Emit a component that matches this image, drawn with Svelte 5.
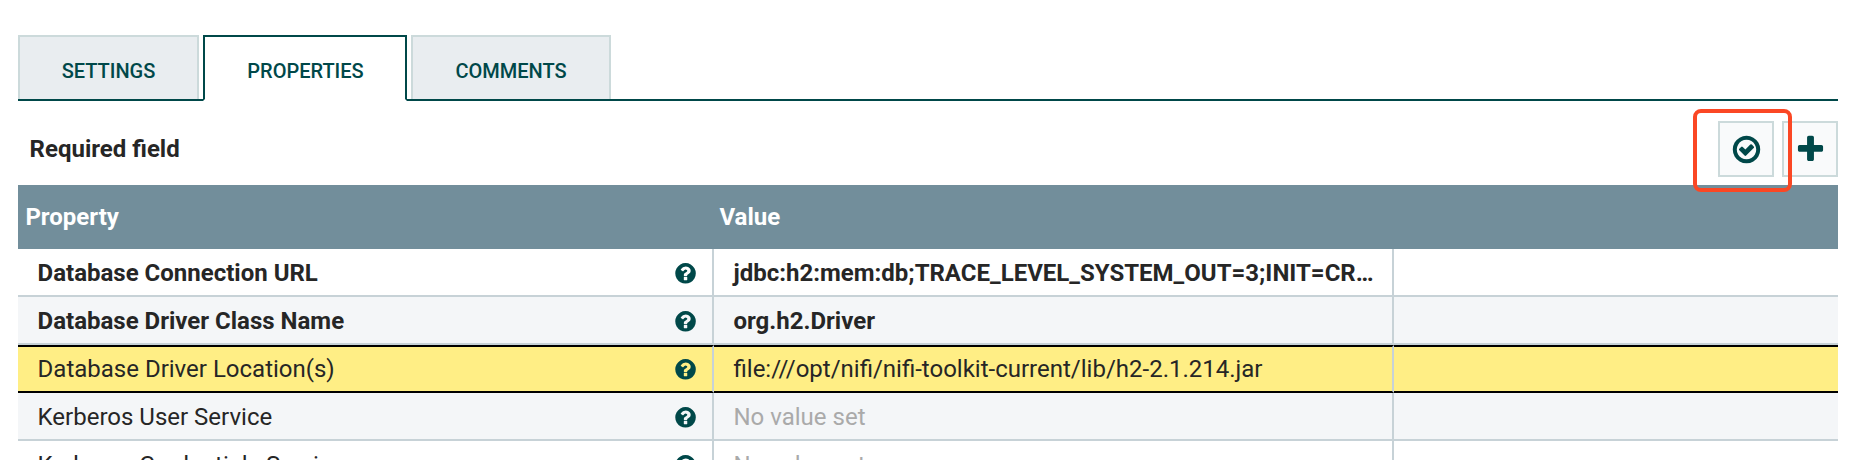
<script>
  const tabs = [
    { label: 'SETTINGS', width: 181 },
    { label: 'PROPERTIES', width: 204, active: true },
    { label: 'COMMENTS', width: 200 }
  ];
  const rows = [
    { name: 'Database Connection URL', value: 'jdbc:h2:mem:db;TRACE_LEVEL_SYSTEM_OUT=3;INIT=CR…', required: true },
    { name: 'Database Driver Class Name', value: 'org.h2.Driver', required: true },
    { name: 'Database Driver Location(s)', value: 'file:///opt/nifi/nifi-toolkit-current/lib/h2-2.1.214.jar', selected: true },
    { name: 'Kerberos User Service', value: null },
    { name: 'Kerberos Credentials Service', value: null }
  ];
  const disc = 'm224 0q0 209-103 385.5t-279.5 279.5-385.5 103-385.5-103-279.5-279.5-103-385.5 103-385.5 279.5-279.5 385.5-103 385.5 103 279.5 279.5 103 385.5z';
  const check = 'M1299 813l-422 422q-19 19-45 19t-45-19l-294-294q-19-19-19-45t19-45l102-102q19-19 45-19t45 19l147 147 275-275q19-19 45-19t45 19l102 102q19 19 19 45t-19 45zm141 83q0-148-73-273t-198-198-273-73-273 73-198 198-73 273 73 273 198 198 273 73 273-73 198-198 73-273z' + disc;
  const plus = 'M1600 736v192q0 40-28 68t-68 28h-416v416q0 40-28 68t-68 28h-192q-40 0-68-28t-28-68v-416h-416q-40 0-68-28t-28-68v-192q0-40 28-68t68-28h416v-416q0-40 28-68t68-28h192q40 0 68 28t28 68v416h416q40 0 68 28t28 68z';
  const question = 'M1024 1376v-192q0-14-9-23t-23-9h-192q-14 0-23 9t-9 23v192q0 14 9 23t23 9h192q14 0 23-9t9-23zm256-672q0-88-55.5-163t-138.5-116-170-41q-243 0-371 213-15 24 8 42l132 100q7 6 19 6 16 0 25-12 53-68 86-92 34-24 86-24 48 0 85.5 26t37.5 59q0 38-20 61t-68 45q-63 28-115.5 86.5t-52.5 125.5v36q0 14 9 23t23 9h192q14 0 23-9t9-23q0-19 21.5-49.5t54.5-49.5q32-18 49-28.5t46-35 44.5-48 28-60.5 12.5-81zm384 192q0 209-103 385.5t-279.5 279.5-385.5 103-385.5-103-279.5-279.5-103-385.5 103-385.5 279.5-279.5 385.5-103 385.5 103 279.5 279.5 103 385.5z';
</script>

<div class="dialog">
  <div class="tabs">
    {#each tabs as tab}
      <div class="tab" class:active={tab.active} style="width: {tab.width}px">{tab.label}</div>
    {/each}
  </div>

  <div class="toolbar">
    <span class="required-label">Required field</span>
    <div class="actions">
      <button class="action" aria-label="Verify properties">
        <svg viewBox="-28 -28 1792 1792" width="32" height="32"><path d={check} /></svg>
      </button>
      <button class="action" aria-label="Add property">
        <svg viewBox="-28 -28 1792 1792" width="32" height="32"><path d={plus} /></svg>
      </button>
      <div class="highlight"></div>
    </div>
  </div>

  <div class="grid head">
    <div>Property</div>
    <div>Value</div>
    <div></div>
  </div>
  {#each rows as row}
    <div class="grid row" class:required={row.required} class:selected={row.selected}>
      <div class="cell name">
        <span>{row.name}</span>
        <svg viewBox="-40 -25 1792 1792" width="24" height="24"><path d={question} /></svg>
      </div>
      <div class="cell value" class:unset={!row.value}><span>{row.value ?? 'No value set'}</span></div>
      <div class="cell last"></div>
    </div>
  {/each}
</div>

<style>
  :global(body) { background: #fff; }
  .dialog {
    box-sizing: border-box;
    width: 1866px;
    height: 460px;
    overflow: hidden;
    padding: 35px 28px 0 18px;
    font-family: Roboto, sans-serif;
    font-size: 24px;
    color: #262626;
    background: #fff;
  }
  .dialog * { box-sizing: border-box; }
  svg { display: block; fill: #004849; flex: none; }
  .tabs {
    display: flex;
    height: 66px;
    background: linear-gradient(#004849, #004849) 0 100% / 100% 2px no-repeat;
  }
  .tab {
    height: 64px;
    margin-right: 4px;
    padding-top: 4px;
    border: 2px solid #ccdadb;
    border-bottom: 0;
    background: #e9edf0;
    color: #004849;
    font-size: 20px;
    font-weight: 500;
    line-height: 60px;
    text-align: center;
  }
  .tab.active {
    height: 66px;
    padding-left: 1px;
    border: 2px solid #004849;
    border-bottom-color: #fff;
    background: #fff;
  }
  .toolbar {
    display: flex;
    justify-content: space-between;
    height: 84px;
    padding-top: 20px;
  }
  .required-label {
    padding-left: 11.6px;
    font-weight: 700;
    line-height: 56px;
  }
  .actions { position: relative; display: flex; gap: 8px; }
  .action {
    display: flex;
    align-items: center;
    justify-content: center;
    width: 56px;
    height: 56px;
    padding: 0;
    border: 2px solid #ccdadb;
    background: #f9fafb;
  }
  .highlight {
    position: absolute;
    left: -25px;
    top: -12px;
    width: 99px;
    height: 83px;
    border: 4px solid #fb4724;
    border-radius: 8px;
  }
  .grid {
    display: grid;
    grid-template-columns: 696px 680px 444px;
  }
  .head {
    height: 64px;
    background: #728e9b;
    color: #fff;
    font-weight: 700;
    line-height: 64px;
    padding-left: 7.4px;
    grid-template-columns: 694px 1fr 1px;
  }
  .row { height: 48px; line-height: 44px; background: #fff; }
  .row:nth-child(odd) { background: #f4f6f8; }
  .cell {
    display: flex;
    align-items: center;
    height: 48px;
    padding-top: 2px;
    border: 0 solid #c7d2d7;
    border-width: 0 2px 2px 0;
    white-space: nowrap;
  }
  .cell.last { border-right: 0; }
  .name { justify-content: space-between; padding-left: 19.6px; padding-right: 15px; }
  .value { padding-left: 19.5px; }
  .required { font-weight: 700; }
  .unset { color: #aaa; }
  .row.selected { background: #ffee85; }
  .selected .cell {
    padding-top: 0;
    border-top: 2px solid #000;
    border-bottom-color: #000;
  }
</style>
